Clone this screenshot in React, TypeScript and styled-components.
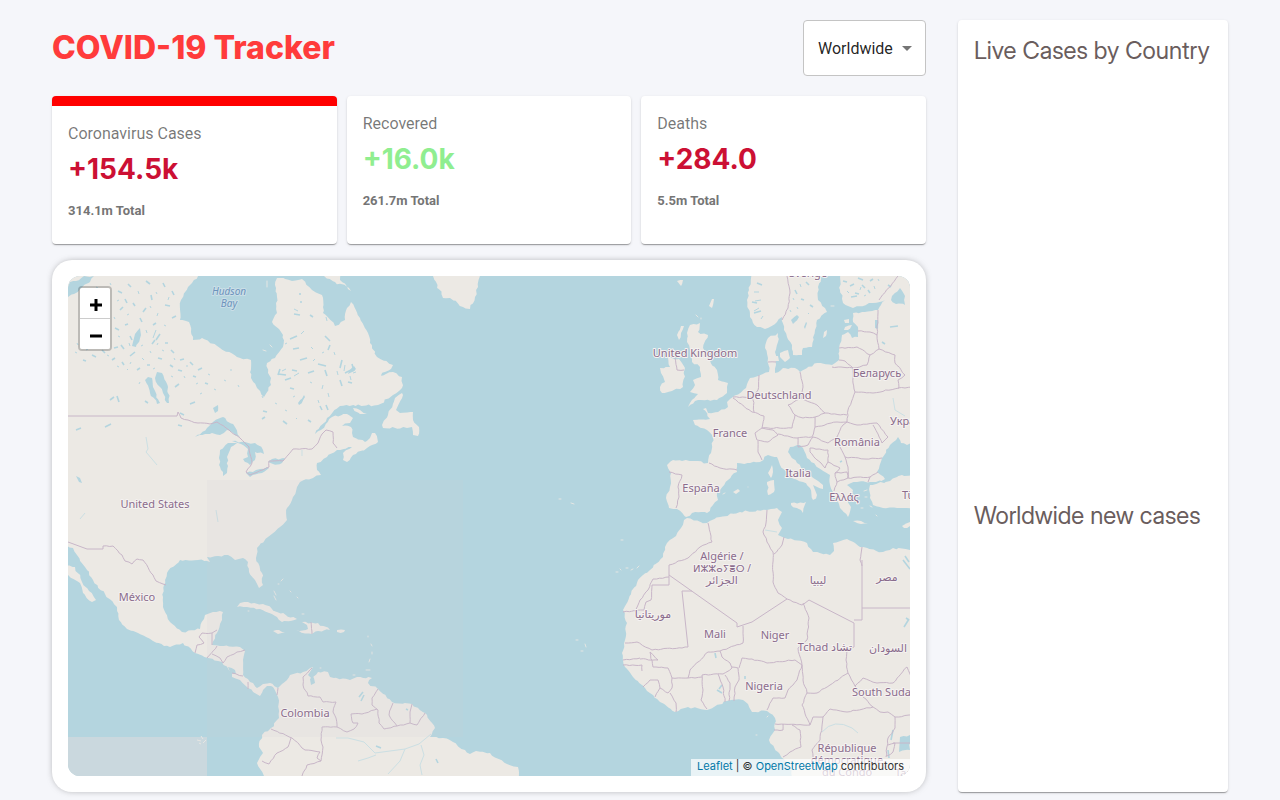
import React from 'react';
import styled, { createGlobalStyle } from 'styled-components';

const GlobalStyle = createGlobalStyle`
  *, *::before, *::after { box-sizing: border-box; }
  body {
    margin: 0;
    background: #f5f6fa;
    font-family: Inter, "Liberation Sans", sans-serif;
  }
`;

const cardShadow =
  '0 2px 1px -1px rgba(0,0,0,.2), 0 1px 1px 0 rgba(0,0,0,.14), 0 1px 3px 0 rgba(0,0,0,.12)';

const Page = styled.div`
  display: grid;
  grid-template-columns: minmax(0, 1fr) 270px;
  column-gap: 32px;
  padding: 20px 52px 8px;
`;

const Main = styled.main`
  display: flex;
  flex-direction: column;
  min-width: 0;
`;

const Header = styled.header`
  display: flex;
  align-items: center;
  justify-content: space-between;
  margin-bottom: 20px;
`;

const Title = styled.h1`
  margin: 0;
  font-size: 32px;
  line-height: 40px;
  font-weight: 800;
  color: #ff3b3b;
`;

const SelectBox = styled.label`
  position: relative;
  display: block;
`;

const CountrySelect = styled.select`
  appearance: none;
  height: 56px;
  width: 123px;
  padding: 0 32px 0 14px;
  border: 1px solid #c4c4c4;
  border-radius: 4px;
  background: #fff;
  color: rgba(0, 0, 0, 0.87);
  font-family: Roboto, sans-serif;
  font-size: 16px;
`;

const Arrow = styled.svg`
  position: absolute;
  right: 7px;
  top: 16px;
  pointer-events: none;
`;

const Stats = styled.section`
  display: grid;
  grid-template-columns: repeat(3, minmax(0, 1fr));
  gap: 10px;
`;

const StatCard = styled.article<{ $selected?: boolean }>`
  height: 148px;
  padding: 16px;
  border-radius: 4px;
  border-top: ${(p) => (p.$selected ? '10px solid red' : '0')};
  background: #fff;
  box-shadow: ${cardShadow};
`;

const StatLabel = styled.p`
  margin: 0;
  font-family: Roboto, sans-serif;
  font-size: 16px;
  line-height: 24px;
  color: rgba(0, 0, 0, 0.54);
`;

const StatValue = styled.h2<{ $good?: boolean }>`
  margin: 6px 0 15px;
  font-size: 28px;
  line-height: 34px;
  font-weight: 700;
  color: ${(p) => (p.$good ? 'lightgreen' : '#cc1034')};
`;

const StatTotal = styled.p`
  margin: 0;
  font-family: Roboto, sans-serif;
  font-size: 13px;
  line-height: 20px;
  font-weight: 700;
  color: #757575;
`;

const MapCard = styled.section`
  margin-top: 16px;
  padding: 16px;
  border-radius: 20px;
  background: #fff;
  box-shadow: 0 0 8px -4px rgba(0, 0, 0, 0.5), 0 0 6px rgba(0, 0, 0, 0.08);
`;

const MapFrame = styled.div`
  position: relative;
  height: 500px;
  border-radius: 12px;
  overflow: hidden;
  background: #ddd;
`;

const MapDrawing = styled.svg`
  display: block;
  width: 100%;
  height: 100%;
`;

const ZoomControl = styled.div`
  position: absolute;
  top: 10px;
  left: 10px;
  display: flex;
  flex-direction: column;
  border: 2px solid rgba(0, 0, 0, 0.2);
  border-radius: 4px;
  background-clip: padding-box;
`;

const ZoomButton = styled.button`
  display: flex;
  align-items: center;
  justify-content: center;
  width: 30px;
  height: 30px;
  padding: 4px 0 0 2px;
  border: 0;
  border-radius: 0 0 2px 2px;
  background: #fff;
  color: #000;

  &:first-child {
    height: 31px;
    border-bottom: 1px solid #ccc;
    border-radius: 2px 2px 0 0;
  }
`;

const Attribution = styled.div`
  position: absolute;
  right: 0;
  bottom: 0;
  padding: 0 6px 2px;
  font-size: 11px;
  line-height: 15px;
  color: #333;
  background: rgba(255, 255, 255, 0.7);
`;

const MapLink = styled.a`
  color: #0078a8;
  text-decoration: none;
`;

const Side = styled.aside`
  padding: 16px;
  border-radius: 4px;
  background: #fff;
  box-shadow: ${cardShadow};
`;

const SideTitle = styled.h3`
  margin: 0;
  font-family: "Inter Display", Inter, "Liberation Sans", sans-serif;
  font-size: 24px;
  line-height: 29px;
  font-weight: 400;
  color: #6a5d5d;
  white-space: nowrap;
`;

const CountryList = styled.div`
  height: 400px;
  margin: 20px 0 16px;
  overflow: auto;
`;

/* ---- Map drawing ---- */

// Adds small deterministic irregularities between the vertices of an outline.
function rough(points: string, amount = 1): string {
  const pts = points.trim().split(/\s+/).map((p) => p.split(',').map(Number));
  const out: string[] = [];
  let seed = 7;
  const rand = () => {
    seed = (seed * 1103515245 + 12345) % 2147483648;
    return seed / 2147483648 - 0.5;
  };
  for (let i = 0; i < pts.length; i++) {
    const [x, y] = pts[i];
    out.push(`${x},${y}`);
    if (i === pts.length - 1) break;
    const [nx, ny] = pts[i + 1];
    const n = Math.floor(Math.hypot(nx - x, ny - y) / 3);
    for (let k = 1; k < n; k++) {
      const t = k / n;
      out.push(
        `${(x + (nx - x) * t + rand() * 2 * amount).toFixed(1)},${(y + (ny - y) * t + rand() * 2 * amount).toFixed(1)}`
      );
    }
  }
  return out.join(' ');
}

const land = [
  // North and Central America, continuing into South America
  '60,270 202,270 198,276 192,283 188,287 181,300 180,320 189,322 193,340 202,338 220,348 237,357 251,360 251,378 257,388 264,397 271,385 271,378 268,373 267,363 275,358 283,347 283,335 272,322 277,313 276,303 277,297 275,285 277,278 280,278 292,281 302,279 312,290 322,295 323,307 323,313 335,326 345,320 347,308 351,302 360,318 368,333 370,343 377,357 393,365 391,369 377,377 393,372 402,377 402,388 393,395 378,405 340,406 327,418 315,434 321,430 332,417 347,414 353,418 350,423 342,426 351,427 353,437 365,442 370,438 372,433 375,433 378,442 367,448 353,455 347,462 343,460 343,453 352,447 337,450 327,457 317,463 317,470 321,475 313,478 300,482 297,487 292,500 287,508 287,520 280,527 268,537 257,548 256,558 262,573 263,585 259,588 255,580 249,572 248,562 243,558 235,560 228,555 218,556 207,557 210,562 198,560 180,560 167,573 164,585 163,597 163,607 170,622 182,632 200,629 205,615 213,612 223,612 222,620 217,633 212,645 220,646 240,647 245,651 243,660 243,675 250,682 257,688 263,684 270,683 278,688 282,684 290,675 303,672 313,667 308,675 312,680 318,672 328,672 330,677 350,680 357,677 372,678 368,683 378,689 392,702 412,704 425,713 435,728 430,737 443,738 453,742 465,750 470,754 476,751 490,753 507,764 518,767 521,782 264,782 264,776 257,763 263,753 259,747 262,735 271,728 279,718 278,697 273,687 267,686 263,690 260,696 248,688 240,680 232,677 232,672 222,662 208,658 195,653 183,643 170,647 153,641 138,633 127,629 119,620 117,607 105,594 93,580 85,567 77,555 73,548 60,546',
  '60,563 75,567 82,582 89,591 96,600 92,602 83,593 80,583 60,570',
  '432,270 433,276 443,298 450,298 463,307 470,309 475,297 478,287 480,270',
  '402,393 395,398 388,415 382,425 383,428 407,428 412,427 413,435 418,436 419,427 413,420 413,412 400,413 396,410 403,395',
  '353,408 360,410 367,414 360,414 353,408',
  '324,270 324,276 335,282 349,288 351,291 340,280 342,270',
  '237,607 240,603 248,602 263,604 277,612 297,619 282,622 277,617 260,609 247,607 237,607',
  '273,631 279,630 285,632 278,634 273,631',
  '302,622 318,623 330,630 318,631 312,634 296,631 308,629 307,625 302,622',
  '337,630 345,630 344,632 337,632',
  // Scandinavia
  '752,270 749,290 747,300 750,317 757,327 765,329 777,322 782,317 784,330 787,337 792,345 793,355 802,355 803,348 812,347 815,330 817,320 827,312 825,308 818,300 818,287 824,270',
  // Continental Europe
  '840,270 840,290 843,303 853,308 873,303 885,300 878,310 865,312 853,313 853,322 858,327 858,337 852,338 848,332 842,335 839,348 839,360 832,365 817,363 800,372 795,368 783,368 775,373 776,365 775,352 778,342 778,333 768,338 765,348 768,358 769,372 758,376 750,378 746,388 733,397 727,402 728,407 718,412 708,413 706,408 703,409 710,419 693,420 695,425 707,430 713,438 711,453 708,463 695,461 673,460 667,465 671,473 670,487 666,498 669,508 677,509 686,517 692,513 707,513 718,500 717,492 728,480 737,472 737,463 750,463 760,462 768,455 777,457 780,465 790,477 803,482 810,488 813,500 817,495 815,490 813,485 823,489 823,485 812,477 797,463 788,452 790,447 800,445 803,448 807,458 825,472 830,475 830,485 833,492 840,508 848,517 851,507 847,500 852,494 853,490 847,485 857,482 870,482 876,482 885,479 877,472 882,458 890,445 898,437 901,443 907,445 920,438 920,270',
  '920,475 902,475 890,481 870,485 870,498 873,505 883,508 897,508 907,508 920,510',
  '690,325 700,323 698,332 708,335 703,348 708,358 717,370 718,380 728,383 727,393 717,400 698,400 688,407 690,403 698,394 690,392 695,385 693,380 701,377 700,367 692,362 690,350 687,342 687,333 690,325',
  '668,358 679,359 685,368 683,387 672,391 662,393 660,387 665,382 661,373 660,368 670,367 668,358',
  '772,465 773,472 771,478 768,473 772,465',
  '767,482 774,480 774,492 768,495 767,482',
  '791,503 806,502 803,513 791,505',
  '853,521 861,521 868,523 861,524 853,521',
  '902,526 910,522 910,526 904,528',
  '733,492 738,489 740,491 736,494',
  '780,353 788,350 790,358 785,362 780,357',
  '774,356 778,356 779,361 775,361',
  '823,338 824,332 827,330 826,336 823,338',
  '845,327 852,325 848,330 844,330',
  '844,320 849,319 849,323 845,323',
  '677,335 681,326 684,326 681,333 679,340',
  '709,306 712,299 714,299 712,308',
  '677,281 683,280 681,286',
  // Africa
  '687,518 707,523 720,517 740,512 767,510 777,508 782,512 778,520 782,528 778,535 785,538 807,543 813,552 830,555 834,551 833,543 847,539 860,547 883,552 893,548 920,550 920,782 794,782 790,767 778,752 769,740 775,730 775,718 767,711 752,712 748,704 743,700 727,701 707,710 688,707 675,712 660,702 645,688 633,677 625,667 622,653 625,640 627,623 623,610 638,580 650,570 663,557 667,543 676,536 681,528 684,520',
];

const seas = [
  // Great Lakes
  '195,437 207,428 213,422 223,417 235,427 240,437 233,433 227,430 220,435 212,433 197,436',
  '228,443 220,450 219,458 221,470 223,476 227,473 228,466 227,457 231,447 237,443',
  '232,441 245,442 255,443 263,450 264,454 255,452 255,460 250,465 243,459 248,457 248,449 241,444',
  '246,473 256,470 267,467 269,468 262,473 250,477',
  '268,462 272,459 285,458 282,463 273,464',
  // Lakes Winnipeg and Winnipegosis
  '157,372 162,373 168,387 169,403 167,403 163,393 155,378',
  '148,377 152,378 153,387 160,403 157,404 150,393 145,380',
  // Northern lakes and inlets
  '68,287 70,282 76,281 84,276 94,276 90,282 80,289 74,294 68,297',
  '135,334 140,328 141,335 136,347 132,346',
  '213,408 218,405 218,411 215,413',
  '892,296 900,288 905,296 905,305 896,304 891,300',
  '875,320 878,320 878,329 875,328',
  '310,679 313,676 315,683 311,685',
  '791,320 797,315 799,317 793,324',
  '804,327 806,322 807,323 805,329',
  '76,476 80,478 82,483 79,482',
  '349,371 354,366 356,369 348,374',
  '298,403 304,395 305,397 299,405',
  '228,667 235,670 236,674 230,672',
  '900,737 910,735 910,750 899,752',
];

// Small lakes and river reaches
const flecks =
  'M86 296l3 2M103 300l3-3M118 291l4 2M128 284l3 3M146 281l4 3M163 283l2 4M172 291l2 4M120 310l3-3M133 303l2 3M143 312l3-4M160 334l-4 6M155 340l-3 4M115 328l4 2M125 325l3-1M121 345l3 4M114 348l4-1M135 352l-5 4M102 350l3 3M92 355l4 2M83 360l3 1M112 360l3-2M122 362l2 3M137 370l3-2M147 365l3 0M158 358l4 1M171 350l3 3M180 360l4-1M190 362l3 3M178 370l4 1M193 376l3 1M170 365l3 2M175 387l4-3M198 370l4-2M205 383l3 1M145 401l3 2M110 400l4-3M117 396l2 6M190 404l5-2M180 413l4 2M76 430l5-2M105 427l6-3M178 425l4 1M98 320l2 4M88 338l3 1M151 295l1 5M165 305l5 1M172 318l4-2M153 325l3-2M140 318l2 4M130 336l2 4M107 313l2 3M125 299l2 4M165 343l3 0M294 314l6 1M290 339l7-3M293 349l6-1M300 360l7-2M278 374l8 1M285 380l6-2M292 370l5 1M280 369l-2 6M290 388l4 1M308 373l6-2M318 364l8 2M325 370l2 6M342 360l-2 8M345 373l6-3M352 364l2 7M340 380l2 6M348 382l4 1M325 336l5 5M300 293l0 2M330 345l-2 5M263 411l4 1M262 419l3-2M283 421l4 3M308 420l3 2M326 405l2 5M320 406l2 4M310 315l3 2M300 302l2 0M757 283l5 2M752 302l5 1M754 313l7-2M795 290l2 4M806 282l3 3M801 299l3 1M810 305l3 2M843 281l4 1M850 286l4-2M855 293l4 1M862 285l3 3M858 278l5 2M870 281l3-2M868 290l2 3M851 297l6-1M888 285l3 2M890 327l8-1M882 342l3 2M715 653l1 5M717 690l5 3M722 685l-3 4M904 627l5-8M906 618l3 2M903 560l7 9M905 556l4 6M359 697l4-5M361 701l3-6M376 746l5 2M436 759l2 4M406 709l2 1M893 730l-2 10M888 750l1 8M745 676l0 3M840 462l2-1';

const thinFlecks =
  'M96 287l2 1M110 283l1 2M117 301l2-1M138 291l1 3M156 292l1 2M168 300l1-3M93 307l2 1M114 317l1 2M127 315l2-1M150 306l1 2M158 313l-1 3M164 325l2 1M146 330l1 3M118 336l2 1M108 333l1-2M98 343l2 1M86 350l2-1M77 343l1 2M141 346l2-1M150 351l1 2M162 350l2 1M157 345l1-2M129 343l1 3M107 355l2 1M130 364l1-2M142 358l2 2M153 369l2-1M174 358l1 2M186 366l2 0M184 376l1 2M196 384l2-1M208 374l2 1M214 389l2 1M200 394l2-1M224 380l2 1M230 370l2 0M238 385l1 2M171 376l2 1M140 382l-1 2M127 369l1 1M117 366l2 1M75 352l2 1M139 337l-4 8M137 333l-3 10M156 330l-3 8M311 347l2 2M304 331l-3 3M326 317l1 4M334 352l1 3M322 353l2-1M315 359l-2 2M299 373l-5 3M286 369l-4 2M310 382l2 1M323 385l-1 4M328 393l1 4M318 400l1 3M345 365l-1 6M356 372l-3 1M350 376l1 4M337 371l1 4M294 309l4 2M285 344l2-1M295 396l-2 1M275 403l2 1M262 396l1 2M285 410l2 1M296 418l1 1M759 292l-5 0M761 300l-6 1M759 308l-5 3M763 316l-2 3M847 291l2 2M860 290l1-3M874 286l1 3M864 296l2-1M878 279l1 2M800 284l1 3M793 298l1 2M797 307l1 2M808 314l1-1M790 310l1 2';

const rivers =
  'M146 437l2 12l-2 3l6 7l5 6M216 510l2 12M85 513l-5 6M336 738l12 0l16 4l11 11l30 -4l14 -5l12 -10M405 749l-5 12l-12 13M421 745l3 10l-4 10l2 10M358 761l10-3l8-3M302 450l0 6M822 732q12-14 30-4l6 5M893 398l2 12l10 6M765 530l12 2';

const islets =
  'M267 287l0-6M263 350l3 1M270 345l2 2M337 273l3 2M274 591l2 4M281 581l2-2M278 584l1 0M290 591l1 1M297 597l1 1M302 614l2 0M368 636l0 1M371 644l1 2M372 652l0 2M370 659l-1 3M366 670l4 0M353 675l2 0M320 668l1 0M559 499l2 0M571 503l3 1M621 540l2 0M616 572l2 0M620 569l1 1M626 568l2 0M631 570l2-1M637 568l2-2M576 640l2 0M581 651l2 0M585 644l1 3M767 717l1-1M756 735l1 0M865 497l2 0M870 506l2 1M861 508l2 0M864 491l3-1M876 515l1 1M723 494l2-1M748 487l0 0M831 306l3 0M696 315l2 2M701 318l0 1M248 611l1 0M276 600l-2 -4';

const borders = [
  '177,416 178,412 181,418 198,423 210,424 217,422 229,430 240,438 249,447 252,463 246,472 250,475 269,467 269,461 283,461 293,449 312,449 318,443 322,434 326,430 333,432 333,443 337,448',
  '103,549 103,546 113,546 122,555 125,561 132,564 137,559 143,560 153,575 156,581 166,585',
  '195,653 197,645 204,643 199,637 202,633 212,633 217,630',
  '207,658 217,646',
  '212,654 220,658 223,663 227,657 237,652 245,650',
  '232,673 243,676',
  '248,682 248,689',
  '278,688 277,695',
  '312,668 303,677 303,685 308,696 320,697 323,702 336,702 333,712 336,718 337,727 322,727 321,740 323,747 321,761 317,758 320,752 305,750 292,738 271,729',
  '291,738 288,747 277,753 269,764 262,761',
  '321,761 307,765 302,776',
  '337,727 347,732 354,729 358,723 353,723 351,714 362,714 377,709',
  '378,689 372,698 372,705 378,710 379,723 384,729 397,726 389,715 391,708 393,703',
  '412,704 410,712 410,723 417,725 425,713',
  '397,726 410,723',
  '311,622 312,634',
  '787,276 790,293 788,308 782,320',
  '898,276 879,300',
  '878,310 877,335 870,332 858,331',
  '839,348 857,347 870,355 879,349 877,335',
  '879,349 895,355 895,363 905,375 898,380 899,388 873,393 855,392 853,383 853,368 832,367',
  '839,360 845,361 853,368 867,365 870,355',
  '898,388 912,387',
  '855,392 848,410 847,422 837,422',
  '800,372 803,387 802,398 788,405 795,415 803,418 815,417 825,413 817,405 802,399',
  '825,413 847,415',
  '815,417 815,427 837,422',
  '759,375 758,390 753,397 754,412',
  '733,397 752,397',
  '733,398 752,412 764,416 762,428',
  '762,428 755,433 757,440 768,442 778,435 773,430 762,428 792,428 795,415',
  '758,441 758,452 762,460',
  '778,434 797,438 812,437 815,427',
  '798,438 798,447 808,445 813,437 828,443 837,437 843,425 847,422 857,425 877,423 888,437 882,443 878,434 873,425',
  '837,437 840,447 845,457 865,459 882,458',
  '845,457 848,467 848,478 870,477 878,472',
  '810,448 828,450 828,462 825,468 810,452 810,448',
  '828,462 840,468 835,473 837,482 834,491',
  '835,473 847,472 848,478 837,482',
  '870,477 868,482',
  '709,463 720,468 737,470',
  '669,472 682,475 678,487 679,497 676,508',
  '675,358 677,370 684,370',
  '768,362 776,362',
  '767,510 766,523 763,532 767,542 773,552 773,582 778,593 787,599',
  '784,537 782,545 774,554',
  '708,523 712,542 700,547 688,558 669,565',
  '669,577 653,579 648,590 640,600 635,612',
  '652,585 651,600 646,602 644,610 623,612',
  '688,647 652,650 637,642 625,643',
  '787,599 802,605 809,600',
  '854,647 847,650 846,660 848,673 830,685 817,693 807,693',
  '862,547 860,560 862,566',
  '803,603 809,618 807,640 798,648 802,665',
  '743,626 743,643 720,651 708,652 690,670 688,678 672,678 668,668 653,667 650,652',
  '720,651 722,657 730,663 732,668 723,674 702,675 703,690 701,700 707,709',
  '688,678 702,677',
  '718,674 723,687 725,702',
  '725,675 730,683 729,701',
  '732,667 738,668 739,680 735,687 734,701',
  '739,668 742,658 752,659 767,663 795,660 802,665 797,680 788,690 785,698 773,698 767,710',
  '802,665 803,680 807,693 802,705 810,725 775,724',
  '783,724 783,730 774,730',
  '848,673 855,686 863,697 873,707 847,712 830,709 823,717 813,717 810,725',
  '855,686 863,678 877,683 893,683 907,667 911,677',
  '823,717 820,740 812,750 813,757',
  '792,725 800,730 801,747 790,752 783,757',
  '873,707 880,712 888,712 895,717 912,715',
  '895,717 895,728 888,738 886,757',
  '888,745 895,743 893,752 887,756',
  '623,660 640,658',
  '623,665 642,665 642,671',
  '643,687 650,680 658,680 660,688 655,697',
  '660,688 668,693 672,688 672,678',
  '670,693 676,703 676,712',
  '650,652 658,660 640,659',
];

const straightBorders =
  'M68 416H177M68 542L87 549H103M212 633V645M669 565V585H652M669 575L737 623V627L752 622L787 599M692 591H682L688 647M809 600L854 623V647M862 560V620H854M862 608H910M893 743H910';

interface MapLabel {
  text: string;
  x: number;
  y: number;
}

const labels: MapLabel[] = [
  { text: 'United States', x: 155, y: 508 },
  { text: 'México', x: 137, y: 601 },
  { text: 'Colombia', x: 305, y: 717 },
  { text: 'United Kingdom', x: 695, y: 357 },
  { text: 'Deutschland', x: 779, y: 399 },
  { text: 'France', x: 730, y: 437 },
  { text: 'España', x: 701, y: 492 },
  { text: 'Italia', x: 798, y: 477 },
  { text: 'România', x: 857, y: 446 },
  { text: 'Ελλάς', x: 844, y: 501 },
  { text: 'Беларусь', x: 877, y: 377 },
  { text: 'Sverige', x: 808, y: 277 },
  { text: 'Algérie /', x: 722, y: 560 },
  { text: 'الجزائر', x: 722, y: 584 },
  { text: 'ليبيا', x: 818, y: 584 },
  { text: 'مصر', x: 887, y: 581 },
  { text: 'موريتانيا', x: 653, y: 618 },
  { text: 'السودان', x: 888, y: 652 },
  { text: 'Mali', x: 715, y: 638 },
  { text: 'Niger', x: 775, y: 639 },
  { text: 'Tchad تشاد', x: 825, y: 651 },
  { text: 'Nigeria', x: 764, y: 690 },
  { text: 'République', x: 847, y: 752 },
  { text: 'démocratique', x: 847, y: 764 },
  { text: 'du Congo', x: 847, y: 776 },
];

const edgeLabels: MapLabel[] = [
  { text: 'Україна', x: 890, y: 425 },
  { text: 'Türkiye', x: 902, y: 499 },
  { text: 'South Sudan', x: 852, y: 696 },
  { text: 'Tanzania', x: 895, y: 777 },
];

const Place = styled.text`
  font-family: "Noto Sans", "DejaVu Sans", sans-serif;
  font-size: 11px;
  fill: #8a6c8c;
  stroke: #f5f2f1;
  stroke-width: 2px;
  stroke-linejoin: round;
  paint-order: stroke;
`;

const TifinaghPlace = styled(Place)`
  font-size: 10px;
`;

const SeaName = styled(Place)`
  font-size: 10px;
  font-style: italic;
  fill: #6b93bd;
  stroke: #cbdfe7;
`;

function WorldMap() {
  return (
    <MapDrawing viewBox="68 276 842 500" preserveAspectRatio="xMidYMid slice" role="img" aria-label="World map">
      <rect x="68" y="276" width="842" height="500" fill="#b4d5df" />
      <g fill="#ece9e4">
        {land.map((p) => (
          <polygon key={p} points={rough(p)} />
        ))}
      </g>
      <g fill="#b4d5df">
        {seas.map((p) => (
          <polygon key={p} points={rough(p)} />
        ))}
      </g>
      <g fill="none" stroke="#b4d5df">
        <path d={flecks} strokeWidth="1.6" />
        <path d={thinFlecks} strokeWidth="1" />
      </g>
      <path d={rivers} fill="none" stroke="#cbdfe3" strokeWidth="1" />
      <path d={islets} fill="none" stroke="#e4e6e3" strokeWidth="1" strokeLinecap="round" />
      <g fill="none" stroke="#c8b6c8" strokeWidth="1">
        {borders.map((p) => (
          <polyline key={p} points={rough(p, 0.5)} />
        ))}
        <path d={straightBorders} />
      </g>
      <rect x="207" y="480" width="256" height="257" fill="#d0d0d6" opacity="0.12" />
      <rect x="68" y="737" width="139" height="39" fill="#cad8de" />
      <path d="M197 740l4 1M201 736l2 3M203 743l3-3M199 743l2 1" stroke="#e6e6e3" fill="none" />
      {labels.map((l) => (
        <Place key={l.text} x={l.x} y={l.y} textAnchor="middle">
          {l.text}
        </Place>
      ))}
      <TifinaghPlace x="722" y="572" textAnchor="middle">ⵍⵣⵣⴰⵢⴻⵔ /</TifinaghPlace>
      {edgeLabels.map((l) => (
        <Place key={l.text} x={l.x} y={l.y}>
          {l.text}
        </Place>
      ))}
      <SeaName x="229" y="295" textAnchor="middle">Hudson</SeaName>
      <SeaName x="229" y="307" textAnchor="middle">Bay</SeaName>
    </MapDrawing>
  );
}

const stats = [
  { label: 'Coronavirus Cases', value: '+154.5k', total: '314.1m Total', selected: true },
  { label: 'Recovered', value: '+16.0k', total: '261.7m Total', good: true },
  { label: 'Deaths', value: '+284.0', total: '5.5m Total' },
];

export default function App() {
  return (
    <>
      <GlobalStyle />
      <Page>
        <Main>
          <Header>
            <Title>COVID-19 Tracker</Title>
            <SelectBox>
              <CountrySelect aria-label="Country" defaultValue="worldwide">
                <option value="worldwide">Worldwide</option>
              </CountrySelect>
              <Arrow width="24" height="24" viewBox="0 0 24 24" fill="rgba(0,0,0,.54)" aria-hidden="true">
                <path d="M7 10l5 5 5-5z" />
              </Arrow>
            </SelectBox>
          </Header>
          <Stats>
            {stats.map((s) => (
              <StatCard key={s.label} $selected={s.selected}>
                <StatLabel>{s.label}</StatLabel>
                <StatValue $good={s.good}>{s.value}</StatValue>
                <StatTotal>{s.total}</StatTotal>
              </StatCard>
            ))}
          </Stats>
          <MapCard>
            <MapFrame>
              <WorldMap />
              <ZoomControl>
                <ZoomButton aria-label="Zoom in">
                  <svg width="14" height="14" viewBox="0 0 14 14" aria-hidden="true">
                    <path d="M1 7h12M7 1v12" stroke="#000" strokeWidth="3" />
                  </svg>
                </ZoomButton>
                <ZoomButton aria-label="Zoom out">
                  <svg width="14" height="14" viewBox="0 0 14 14" aria-hidden="true">
                    <path d="M1 7h12" stroke="#000" strokeWidth="3" />
                  </svg>
                </ZoomButton>
              </ZoomControl>
              <Attribution>
                <MapLink href="#leaflet">Leaflet</MapLink> | © <MapLink href="#openstreetmap">OpenStreetMap</MapLink>{' '}
                contributors
              </Attribution>
            </MapFrame>
          </MapCard>
        </Main>
        <Side>
          <SideTitle>Live Cases by Country</SideTitle>
          <CountryList />
          <SideTitle>Worldwide new cases</SideTitle>
        </Side>
      </Page>
    </>
  );
}
